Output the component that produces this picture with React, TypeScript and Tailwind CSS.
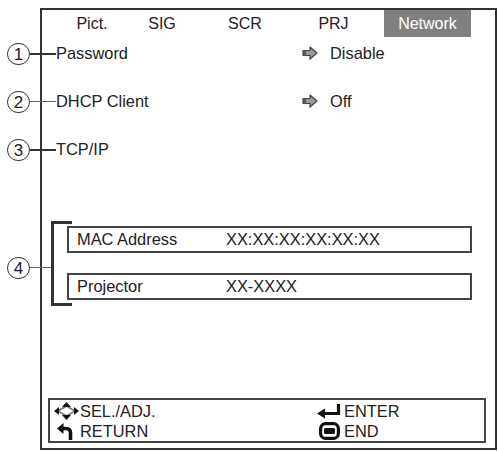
import React from 'react';

const tabs = [
  { label: 'Pict.', w: 'w-[64px]' },
  { label: 'SIG', w: 'w-[76px]' },
  { label: 'SCR', w: 'w-[90px]' },
  { label: 'PRJ', w: 'w-[87px] mr-[7px]' },
];

const ValueArrow: React.FC = () => (
  <svg width="16" height="14" viewBox="0 0 16 14" className="shrink-0">
    <path d="M1 4.5 H8 V1 L15 7 L8 13 V9.5 H1 Z" fill="#9a9a9a" stroke="#444" strokeWidth="1.2" strokeLinejoin="round" />
    <path d="M1 4.5 H4 V9.5 H1 Z" fill="#555" />
  </svg>
);

const SelIcon: React.FC = () => (
  <svg width="25" height="18" viewBox="0 0 25 18" className="shrink-0">
    <polygon points="12.5,4 21,9 12.5,14 4,9" fill="none" stroke="#777" strokeWidth="1.6" />
    <polygon points="12.5,0 8,5 17,5" fill="#111" />
    <polygon points="12.5,18 8,13 17,13" fill="#111" />
    <polygon points="0,9 5,5 5,13" fill="#111" />
    <polygon points="25,9 20,5 20,13" fill="#111" />
  </svg>
);

const ReturnIcon: React.FC = () => (
  <svg width="17" height="17" viewBox="0 0 17 17" className="shrink-0">
    <path d="M5 5.5 H9 Q13.5 5.5 13.5 10 V17" fill="none" stroke="#111" strokeWidth="3.6" />
    <polygon points="0,5.5 6.5,0 6.5,11" fill="#111" />
  </svg>
);

const EnterIcon: React.FC = () => (
  <svg width="24" height="15" viewBox="0 0 24 15" className="shrink-0">
    <path d="M6 9.5 H21.5 V0" fill="none" stroke="#111" strokeWidth="3.2" />
    <polygon points="0,9.5 8,4.5 8,14.5" fill="#111" />
  </svg>
);

const EndIcon: React.FC = () => (
  <svg width="21" height="18" viewBox="0 0 21 18" className="shrink-0">
    <rect x="1.6" y="1.6" width="17.8" height="14.8" rx="5" fill="none" stroke="#111" strokeWidth="3.2" />
    <rect x="5" y="6" width="11" height="6" rx="1.5" fill="#111" />
  </svg>
);

const Callout: React.FC<{ n: string; top: string }> = ({ n, top }) => (
  <div className={`absolute left-[7px] ${top} w-[23px] h-[22px] rounded-full border border-[#333] flex items-center justify-center text-[17px] leading-none text-[#222]`}>
    {n}
  </div>
);

export default function App() {
  return (
    <div className="relative w-[498px] h-[451px] bg-white text-[#222] font-['Liberation_Sans',Arial,sans-serif] overflow-hidden">
      {/* main panel */}
      <div className="absolute left-[40px] top-[8px] w-[457px] h-[442px] border-2 border-[#333] flex flex-col">
        {/* tabs */}
        <div className="flex h-[27px] pl-[18px] text-[16px] leading-none">
          {tabs.map(t => (
            <div key={t.label} className={`${t.w} flex items-center justify-center`}>{t.label}</div>
          ))}
          <div className="w-[87px] flex items-center justify-center bg-[#808080] text-white">Network</div>
        </div>

        {/* menu rows */}
        <div className="pl-[14px] mt-[4px] flex flex-col gap-[24px] text-[16.4px] leading-none">
          <div className="h-6 flex items-center">
            <span className="w-[246px]">Password</span>
            <ValueArrow />
            <span className="ml-[12px]">Disable</span>
          </div>
          <div className="h-6 flex items-center">
            <span className="w-[246px]">DHCP Client</span>
            <ValueArrow />
            <span className="ml-[12px]">Off</span>
          </div>
          <div className="h-6 flex items-center">
            <span>TCP/IP</span>
          </div>
        </div>

        {/* info boxes */}
        <div className="ml-[25px] mr-[23px] mt-[65px] flex flex-col gap-[20px] text-[16.4px] leading-none">
          <div className="h-[27px] border-2 border-[#444] flex items-center pl-[8px]">
            <span className="w-[149px]">MAC Address</span>
            <span>XX:XX:XX:XX:XX:XX</span>
          </div>
          <div className="h-[27px] border-2 border-[#444] flex items-center pl-[8px]">
            <span className="w-[149px]">Projector</span>
            <span>XX-XXXX</span>
          </div>
        </div>

        {/* footer guide */}
        <div className="mt-auto mb-[5px] ml-[6px] mr-[9px] h-[45px] border-2 border-[#444] pt-[1px] grid grid-cols-[267px_1fr] text-[16.4px] leading-none">
          <div className="h-[20px] flex items-center pl-[4px] gap-[1px]">
            <SelIcon />
            <span>SEL./ADJ.</span>
          </div>
          <div className="h-[20px] flex items-center gap-[3px]">
            <EnterIcon />
            <span>ENTER</span>
          </div>
          <div className="h-[20px] flex items-center pl-[7px] gap-[6px]">
            <ReturnIcon />
            <span>RETURN</span>
          </div>
          <div className="h-[20px] flex items-center pl-[2px] gap-[4px]">
            <EndIcon />
            <span>END</span>
          </div>
        </div>
      </div>

      {/* callouts */}
      <Callout n="1" top="top-[43px]" />
      <Callout n="2" top="top-[91px]" />
      <Callout n="3" top="top-[139px]" />
      <Callout n="4" top="top-[257px]" />
      <div className="absolute left-[30px] top-[53px] w-[26px] h-[2px] bg-[#333]" />
      <div className="absolute left-[30px] top-[101px] w-[26px] h-[1px] bg-[#666]" />
      <div className="absolute left-[30px] top-[149px] w-[26px] h-[2px] bg-[#333]" />
      <div className="absolute left-[30px] top-[267px] w-[22px] h-[1px] bg-[#666]" />
      <div className="absolute left-[51px] top-[221px] w-[21px] h-[85px] border-l-[3px] border-t-[3px] border-b-[3px] border-[#333]" />
    </div>
  );
}
